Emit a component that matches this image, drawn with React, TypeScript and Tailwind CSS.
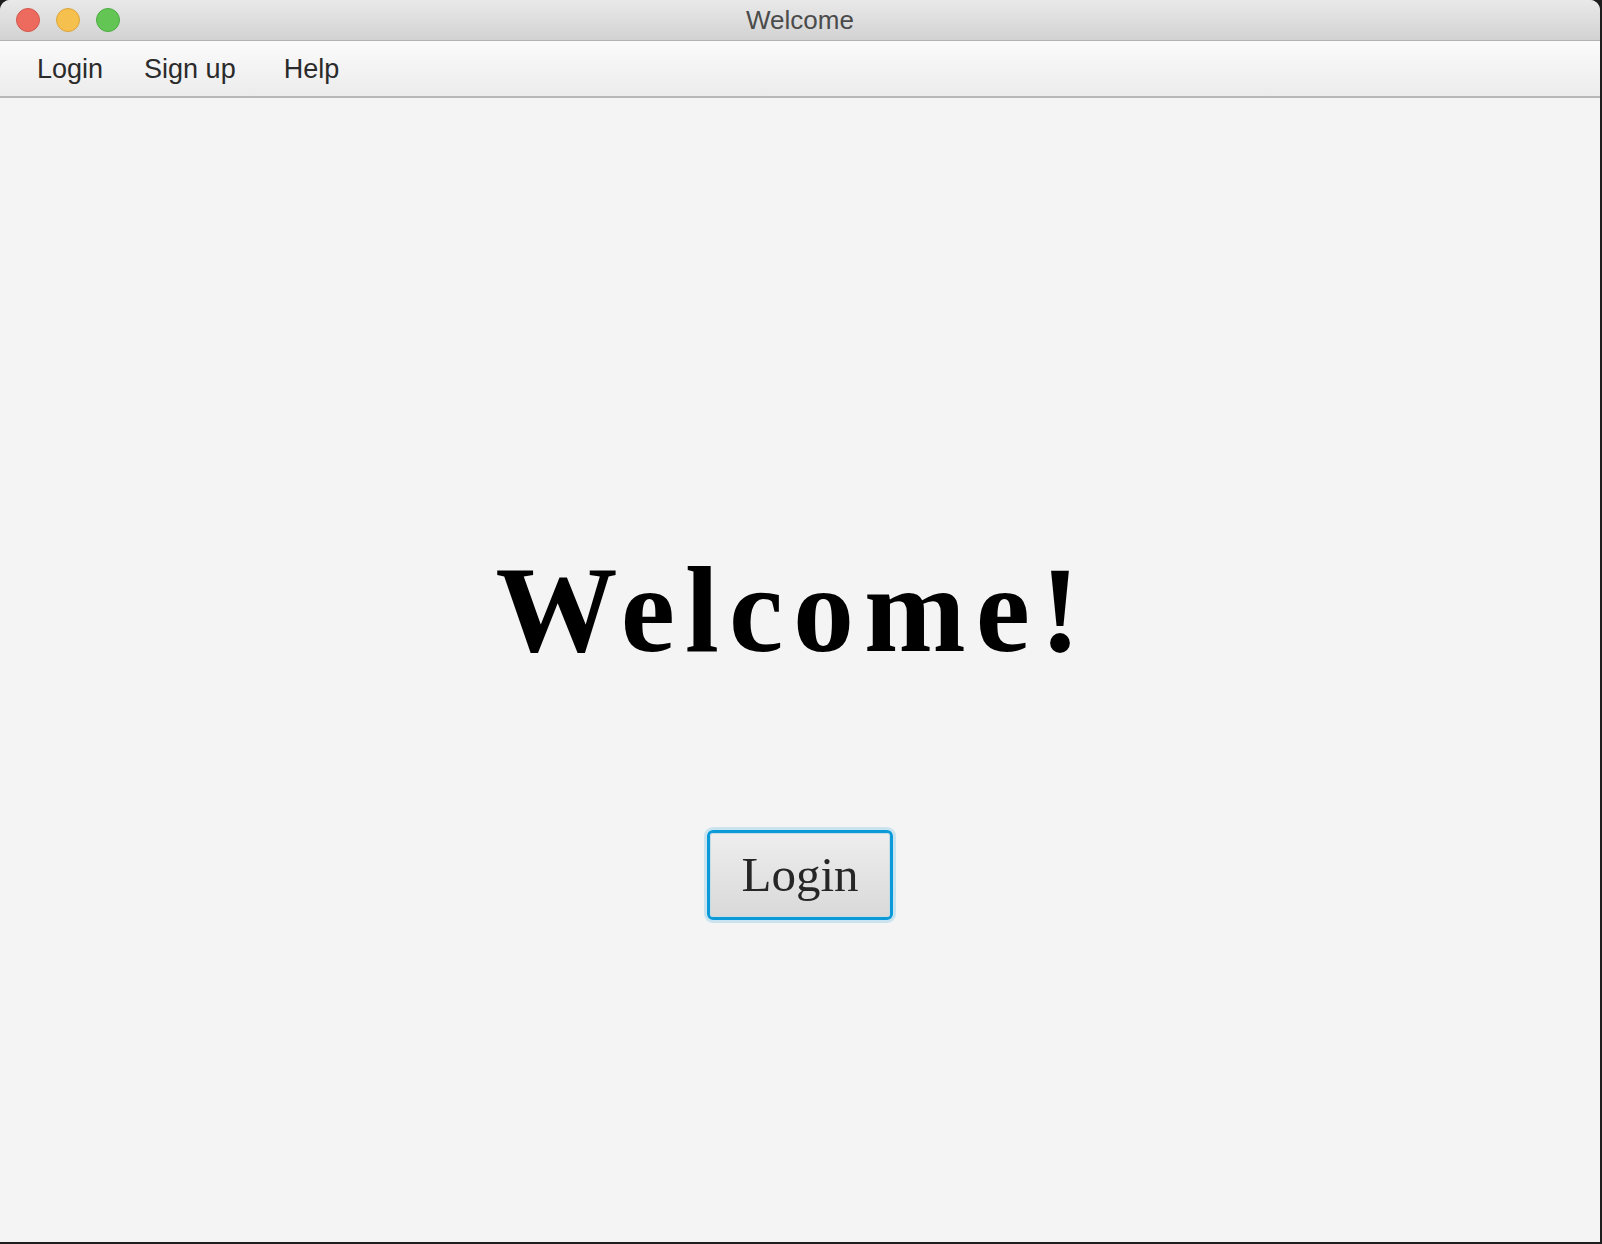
const App = () => {
  const menu = [
    { label: 'Login', cls: 'ml-[37px]' },
    { label: 'Sign up', cls: 'ml-[41px]' },
    { label: 'Help', cls: 'ml-[48px]' },
  ];

  return (
    <div className="w-[1602px] h-[1244px] bg-[#1e1e1e] overflow-hidden">
      <div className="w-[1600px] h-[1242px] flex flex-col bg-[#f4f4f4] rounded-t-[10px] overflow-hidden">
        {/* Title bar */}
        <div className="relative h-[41px] shrink-0 flex items-center bg-gradient-to-b from-[#e9e9e9] to-[#d2d2d2] border-b border-[#b3b3b3]">
          <div className="flex items-center gap-[16px] pl-[16px]">
            <span className="w-[24px] h-[24px] rounded-full bg-[#ed6a5e] border border-[#d4574c]" />
            <span className="w-[24px] h-[24px] rounded-full bg-[#f6c04f] border border-[#dca53a]" />
            <span className="w-[24px] h-[24px] rounded-full bg-[#62c554] border border-[#4fab43]" />
          </div>
          <div className="absolute inset-0 flex items-center justify-center text-[26px] text-[#4b4b4b] font-['Liberation_Sans',Arial,sans-serif]">
            Welcome
          </div>
        </div>

        {/* Menu bar */}
        <div className="h-[57px] shrink-0 flex items-center pt-[2px] bg-gradient-to-b from-[#fbfbfb] to-[#ececec] border-b-2 border-[#b8b8b8] font-['Liberation_Sans',Arial,sans-serif] text-[27px] text-[#2b2b2b]">
          {menu.map((m) => (
            <span key={m.label} className={m.cls}>
              {m.label}
            </span>
          ))}
        </div>

        {/* Content */}
        <div className="flex-1 flex flex-col items-center">
          <h1 className="mt-[451px] mr-[14px] text-[122px] leading-none font-bold text-black tracking-[10px] font-['Liberation_Serif','Times_New_Roman',serif]">
            Welcome!
          </h1>
          <button className="mt-[159px] w-[186px] h-[90px] rounded-[6px] border-[3px] border-[#0a9ad8] shadow-[0_0_0_3px_rgba(10,154,216,0.18)] bg-gradient-to-b from-[#eeeeee] to-[#d9d9d9] flex items-center justify-center text-[49px] text-[#262626] font-['Liberation_Serif','Times_New_Roman',serif]">
            <span className="flex items-center justify-center w-full h-full rounded-[3px] border border-[#c9dbe4]">Login</span>
          </button>
        </div>
      </div>
    </div>
  );
};

export default App;
